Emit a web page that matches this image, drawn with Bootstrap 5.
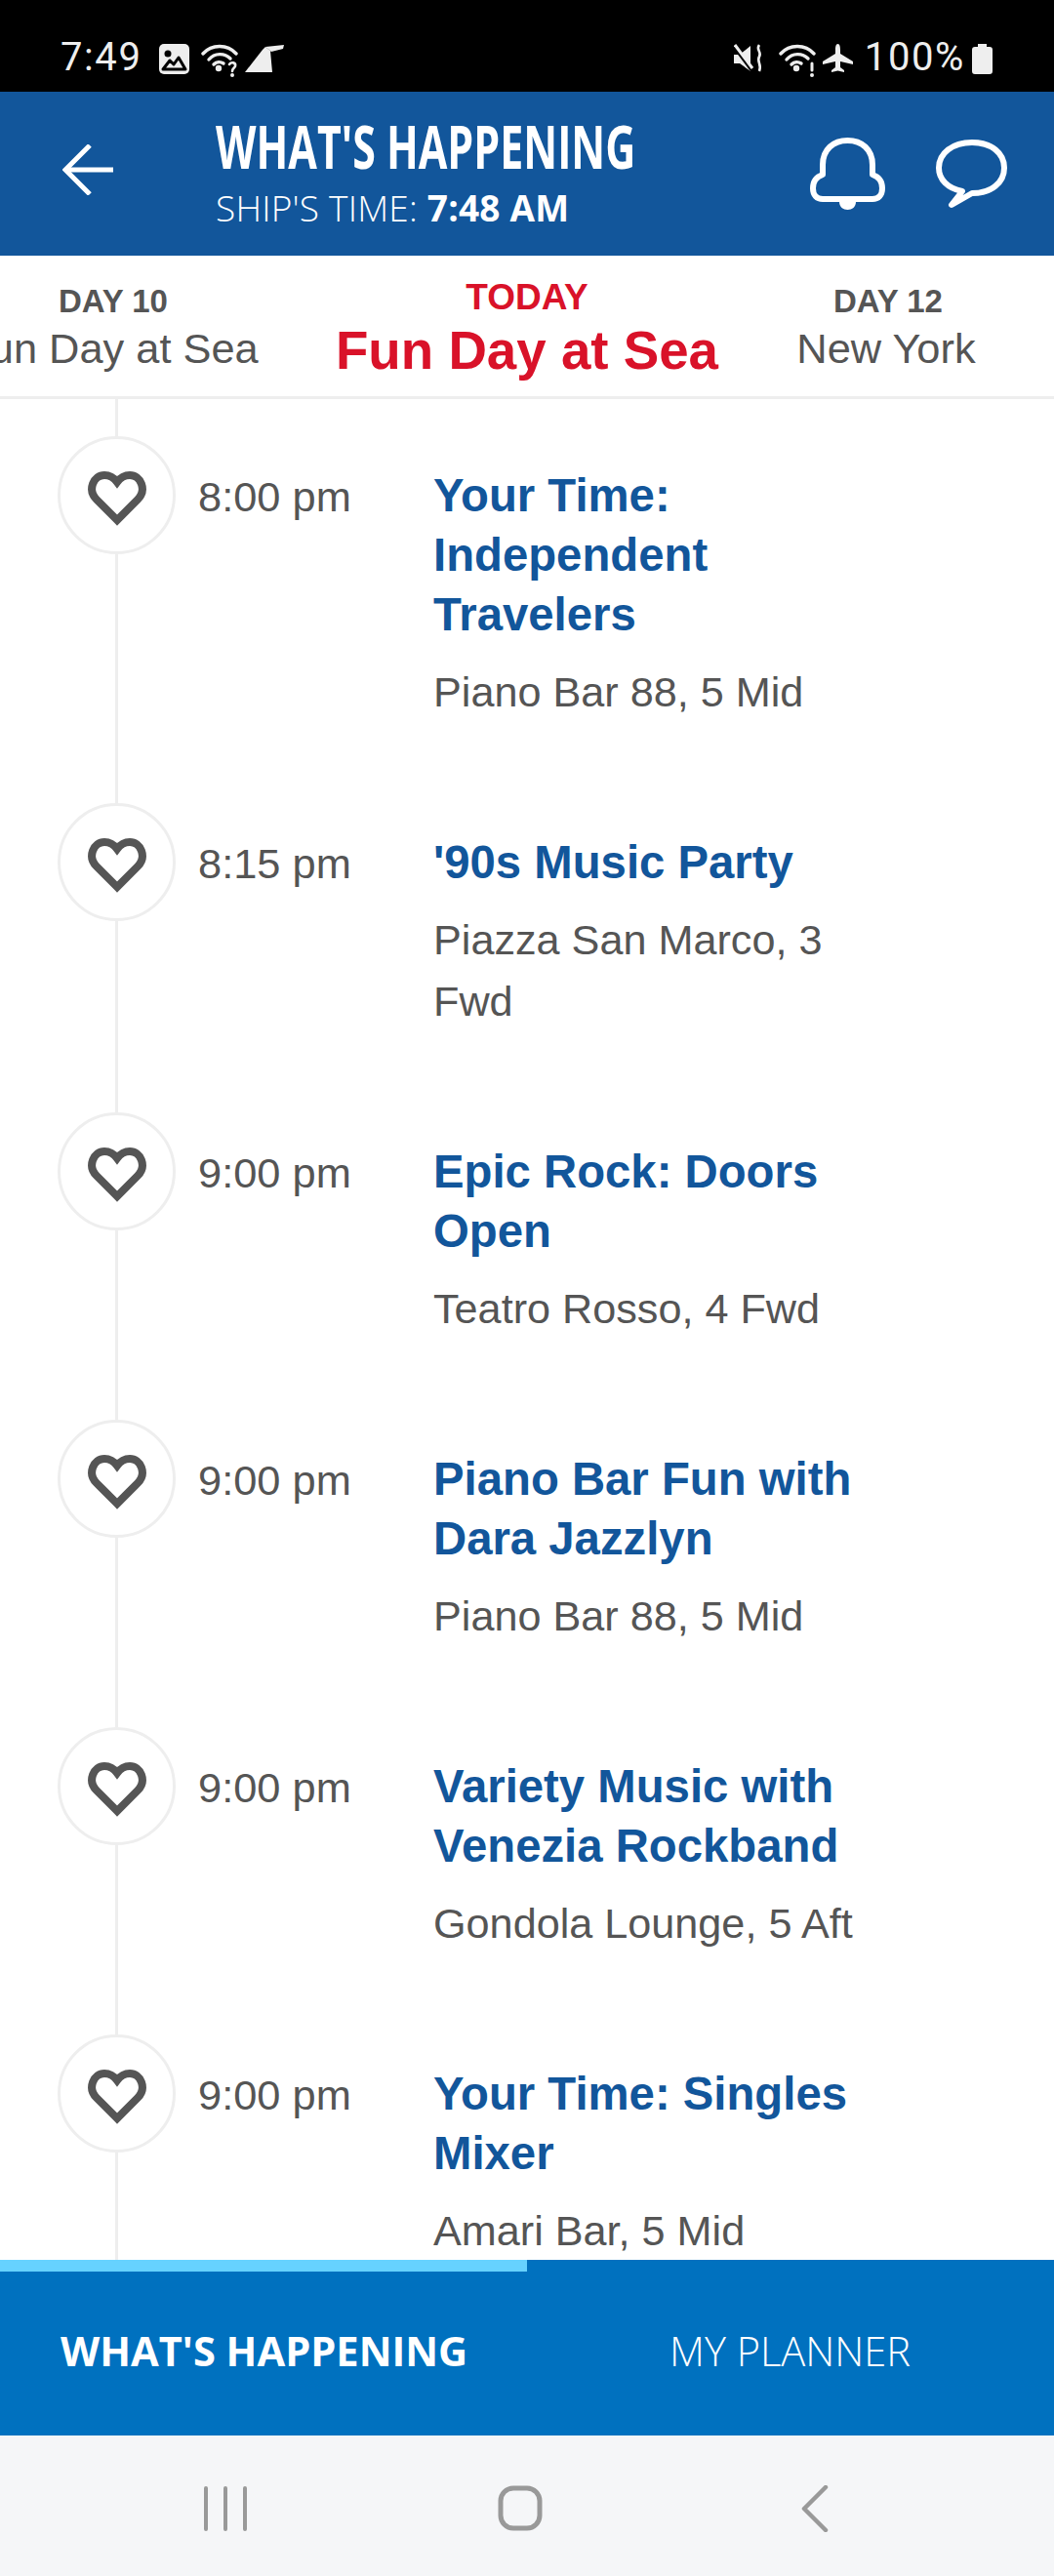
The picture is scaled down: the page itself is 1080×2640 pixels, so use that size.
<!DOCTYPE html>
<html lang="en">
<head>
  <meta charset="UTF-8">
  <meta name="viewport" content="width=device-width, initial-scale=1">
  <title>What's Happening</title>
  <link href="https://cdn.jsdelivr.net/npm/bootstrap@5.3.0/dist/css/bootstrap.min.css" rel="stylesheet">
  <style>
    body { font-family: "Liberation Sans", Arial, sans-serif; background: #fff; }
    .phone-page { height: 2640px; overflow: hidden; }
    .status-strip { height: 94px; background: #000; color: #eee; font-family: Roboto, sans-serif; font-size: 40px; line-height: 1; letter-spacing: 1.6px; padding: 45px 63px 0 62px; }
    .status-strip svg { display: block; flex: none; }
    .status-strip span { margin-top: -6px; }
    .gap-s { margin-left: 7px; }
    .gap-m { margin-left: 12px; }
    .gap-l { margin-left: 17px; }
    .app-head { height: 168px; background: #12569b; color: #fff; font-family: "Open Sans", sans-serif; }
    .back-arrow { margin-left: 64px; margin-right: 105px; }
    .head-title { font-size: 60px; font-weight: 700; line-height: 1; transform: scaleX(.715); transform-origin: left; white-space: nowrap; margin-top: 26px; }
    .head-time { font-size: 37px; line-height: 1; white-space: nowrap; margin-top: 14px; font-weight: 300; letter-spacing: .2px; }
    .head-time b { font-weight: 700; }
    .head-icons { margin-left: auto; padding-right: 48px; gap: 52px; }
    .day-strip { height: 147px; border-bottom: 3px solid #eee; overflow: hidden; background: #fff; color: #555; }
    .day-col { white-space: nowrap; padding-top: 28px; }
    .day-col.side { width: 232px; }
    .day-col.mid { width: 616px; color: #d91229; padding-top: 23px; }
    .day-col.last { width: 124px; }
    .day-num { font-size: 33px; font-weight: 700; line-height: 38px; margin-bottom: 3px; }
    .day-name { font-size: 43.4px; line-height: 52px; margin-right: 4px; }
    .mid .day-num { font-size: 37px; line-height: 40px; margin-bottom: 1px; }
    .mid .day-name { font-size: 54.7px; font-weight: 700; line-height: 66px; margin-right: 0; }
    .event-list { min-height: 0; overflow: hidden; }
    .event-row { padding-left: 59px; }
    .heart-col { width: 121px; flex: none; }
    .rail { width: 3px; background: #eee; }
    .rail.stub { height: 38px; flex: none; }
    .heart-ring { width: 121px; height: 121px; border: 3px solid #eee; border-radius: 50%; flex: none; }
    .heart-ring svg { margin-top: 7px; }
    .event-time { width: 264px; flex: none; padding: 70px 0 0 23px; font-size: 43.4px; line-height: 60px; color: #555; }
    .event-body { width: 450px; padding-top: 68px; padding-bottom: 44px; }
    .event-name { font-size: 47.3px; font-weight: 700; line-height: 61px; color: #12569b; }
    .event-place { font-size: 43.2px; line-height: 63px; color: #555; margin-top: 18px; }
    .bottom-tabs { height: 180px; background: #0071bf; color: #fff; font-family: "Open Sans", sans-serif; font-size: 41.6px; }
    .bottom-tab { width: 540px; border-top: 12px solid #0071bf; padding-top: 56px; line-height: 50px; white-space: nowrap; }
    .bottom-tab.active { border-top-color: #66d2ff; padding-left: 62px; font-weight: 700; }
    .bottom-tab.other { padding-left: 146px; font-weight: 300; }
    .nav-strip { height: 144px; background: #f5f6f8; padding: 5px 14px 0 0; }
    .nav-strip svg { display: block; }
    .nav-spot { width: 302px; }
  </style>
</head>
<body>
  <div class="phone-page d-flex flex-column">

    <!-- Status bar -->
    <div class="status-strip d-flex flex-shrink-0">
      <div class="d-flex align-items-start">
        <span>7:49</span>
        <svg class="gap-l" width="31" height="32" viewBox="0 0 31 32"><rect width="31" height="31" rx="5" fill="#eee"/><circle cx="9" cy="10" r="3.5" fill="#000"/><path d="M4 26 L11 17 L15 21 L20 14 L27 26Z" fill="none" stroke="#000" stroke-width="3" stroke-linejoin="round"/></svg>
        <svg class="gap-m" width="38" height="34" viewBox="0 0 38 34" fill="none" stroke="#eee" stroke-width="3.4" stroke-linecap="round"><path d="M2 10 C11 0 27 0 36 10"/><path d="M8 16 C14 9 24 9 30 15"/><path d="M13 21 C16 18 20 18 23 20"/><circle cx="18" cy="25" r="1.5" fill="#eee"/><path d="M29 21 C31 18 36 19 35 23 C34 25 32 25 32 28" stroke-width="2.6"/><circle cx="32" cy="32" r="1" stroke-width="2"/></svg>
        <svg class="gap-s" width="41" height="30" viewBox="0 0 41 30"><path d="M0 29 L18 6 L21 3 L26 7 L28 29Z" fill="#eee"/><path d="M21 3 L40 1 L39 5 L27 8Z" fill="#eee"/></svg>
      </div>
      <div class="d-flex align-items-start ms-auto">
        <svg width="30" height="30" viewBox="0 0 30 30"><path d="M0 11 H6 L17 2 V28 L6 20 H0Z" fill="#eee"/><path d="M0 3 L18 27" stroke="#000" stroke-width="3"/><path d="M1 1 L19 25" stroke="#eee" stroke-width="3"/><path d="M26 1 C22 6 29 8 26 13 C23 18 29 21 26 28" fill="none" stroke="#eee" stroke-width="2.6"/></svg>
        <svg class="ms-3" width="38" height="34" viewBox="0 0 38 34" fill="none" stroke="#eee" stroke-width="3.4" stroke-linecap="round"><path d="M2 10 C11 0 27 0 36 10"/><path d="M8 16 C14 9 24 9 30 15"/><path d="M13 21 C16 18 20 18 23 20"/><circle cx="18" cy="25" r="1.5" fill="#eee"/><path d="M34 20 V27" stroke-width="3"/><circle cx="34" cy="32" r="1" stroke-width="2"/></svg>
        <svg class="gap-s" width="31" height="30" viewBox="0 0 31 30"><path d="M15.5 0 C13.5 0 13 3 13 6 V10 L0 18 V21 L13 18 V24 L9 27 V29 L15.5 27.5 L22 29 V27 L18 24 V18 L31 21 V18 L18 10 V6 C18 3 17.5 0 15.5 0Z" fill="#eee"/></svg>
        <span class="gap-m">100%</span>
        <svg class="gap-s" width="21" height="31" viewBox="0 0 21 31"><path d="M6 0 H15 V3 H18 Q21 3 21 6 V28 Q21 31 18 31 H3 Q0 31 0 28 V6 Q0 3 3 3 H6Z" fill="#eee"/></svg>
      </div>
    </div>

    <!-- App header -->
    <div class="app-head d-flex flex-shrink-0">
      <svg class="back-arrow flex-shrink-0 align-self-center mb-2" width="52" height="52" viewBox="0 0 52 52" fill="none" stroke="#fff" stroke-width="5"><path d="M28 1 L3 26 L28 51"/><path d="M3 26 H52"/></svg>
      <div>
        <div class="head-title">WHAT'S HAPPENING</div>
        <div class="head-time">SHIP'S TIME: <b>7:48 AM</b></div>
      </div>
      <div class="head-icons d-flex align-items-center">
        <svg width="77" height="74" viewBox="0 0 77 74" fill="none" stroke="#fff" stroke-width="6"><path d="M13 38 V28 C13 12 24 3 38.5 3 C53 3 64 12 64 28 V38 C70 40 74 44 74 52 C74 59 70 63 64 63 H13 C7 63 3 59 3 52 C3 44 7 40 13 38Z" stroke-linejoin="round"/><path d="M30 66 H47 C47 71 43 74 38.5 74 C34 74 30 71 30 66Z" fill="#fff" stroke="none"/></svg>
        <svg width="73" height="71" viewBox="0 0 73 71" fill="none" stroke="#fff" stroke-width="6" stroke-linejoin="round"><path d="M37 55 C57 55 70 44 70 29 C70 14 57 3 37 3 C17 3 3 14 3 29 C3 41 12 50 27 53 L16 67 L37 55Z"/></svg>
      </div>
    </div>

    <!-- Day picker -->
    <div class="day-strip d-flex flex-shrink-0">
      <div class="day-col side d-flex flex-column align-items-center"><div class="day-num">DAY 10</div><div class="day-name">Fun Day at Sea</div></div>
      <div class="day-col mid d-flex flex-column align-items-center"><div class="day-num">TODAY</div><div class="day-name">Fun Day at Sea</div></div>
      <div class="day-col last d-flex flex-column align-items-center"><div class="day-num">DAY 12</div><div class="day-name">New York</div></div>
    </div>

    <!-- Events -->
    <div id="events" class="event-list flex-grow-1"></div>

    <!-- Bottom tabs -->
    <div class="bottom-tabs d-flex flex-shrink-0">
      <div class="bottom-tab active">WHAT'S HAPPENING</div>
      <div class="bottom-tab other">MY PLANNER</div>
    </div>

    <!-- Android nav -->
    <div class="nav-strip d-flex justify-content-center align-items-center flex-shrink-0">
      <div class="nav-spot d-flex justify-content-center"><svg width="46" height="46" viewBox="0 0 46 46" stroke="#999" stroke-width="4" stroke-linecap="round"><path d="M3 2 V44 M23 2 V44 M43 2 V44"/></svg></div>
      <div class="nav-spot d-flex justify-content-center"><svg width="46" height="47" viewBox="0 0 46 47" fill="none" stroke="#999" stroke-width="5"><rect x="3" y="3" width="40" height="41" rx="13"/></svg></div>
      <div class="nav-spot d-flex justify-content-center"><svg width="28" height="48" viewBox="0 0 28 48" fill="none" stroke="#999" stroke-width="4.5" stroke-linecap="round" stroke-linejoin="round"><path d="M25 2 L3 24 L25 46"/></svg></div>
    </div>
  </div>

  <script src="https://cdn.jsdelivr.net/npm/bootstrap@5.3.0/dist/js/bootstrap.bundle.min.js"></script>
  <script>
    const events = [
      ['8:00 pm', 'Your Time: Independent Travelers', 'Piano Bar 88, 5 Mid'],
      ['8:15 pm', "'90s Music Party", 'Piazza San Marco, 3 Fwd'],
      ['9:00 pm', 'Epic Rock: Doors Open', 'Teatro Rosso, 4 Fwd'],
      ['9:00 pm', 'Piano Bar Fun with Dara Jazzlyn', 'Piano Bar 88, 5 Mid'],
      ['9:00 pm', 'Variety Music with Venezia Rockband', 'Gondola Lounge, 5 Aft'],
      ['9:00 pm', 'Your Time: Singles Mixer', 'Amari Bar, 5 Mid']
    ];
    const heart = '<svg width="60" height="56" viewBox="0 0 60 56" fill="none" stroke="#555" stroke-width="8"><path d="M30 50 L9 29 C-1 19 6 4 17 4 C23 4 27 7 30 11 C33 7 37 4 43 4 C54 4 61 19 51 29Z"/></svg>';

    document.getElementById('events').innerHTML = events.map(([time, name, place]) => `
      <div class="event-row d-flex">
        <div class="heart-col d-flex flex-column align-items-center">
          <div class="rail stub"></div>
          <div class="heart-ring d-flex align-items-center justify-content-center">${heart}</div>
          <div class="rail flex-grow-1"></div>
        </div>
        <div class="event-time">${time}</div>
        <div class="event-body">
          <div class="event-name">${name}</div>
          <div class="event-place">${place}</div>
        </div>
      </div>`).join('');
  </script>
</body>
</html>
